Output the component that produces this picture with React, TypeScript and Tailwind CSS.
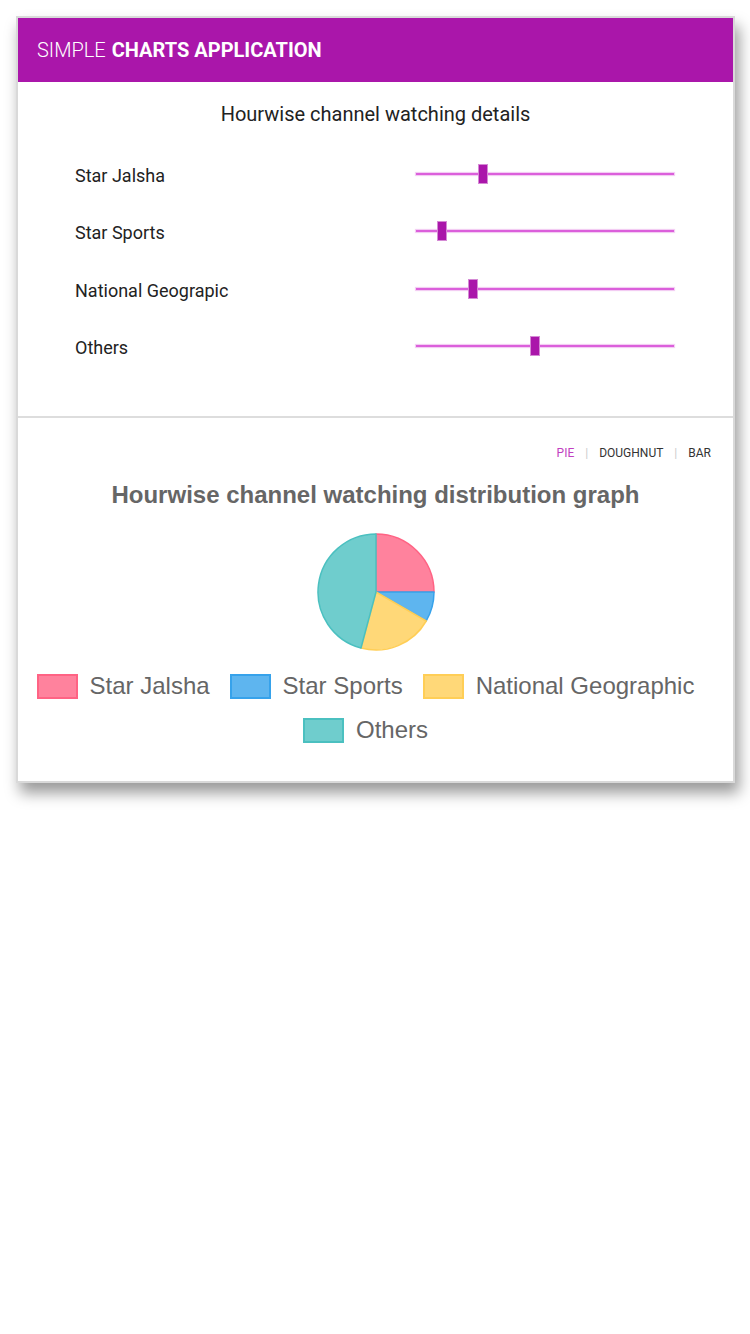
import React from "react";

const channels = [
  { name: "Star Jalsha", hours: 6, fill: "#ff829d", line: "#ff6384" },
  { name: "Star Sports", hours: 2, fill: "#5eb5ef", line: "#36a2eb" },
  { name: "National Geograpic", hours: 5, fill: "#ffd878", line: "#ffce56" },
  { name: "Others", hours: 11, fill: "#6fcdcd", line: "#4bc0c0" },
];

const legendNames = ["Star Jalsha", "Star Sports", "National Geographic", "Others"];

function Slider({ value }: { value: number }) {
  const frac = value / 24;
  return (
    <div className="relative w-[258px] h-[20px] flex items-center">
      <div className="w-full h-[2px] bg-[#db5fdb] shadow-[0_0_1px_1px_rgba(219,95,219,0.35)]" />
      <div
        className="absolute top-0 w-[10px] h-[20px] bg-[#aa16aa] border border-[#d58ad5]"
        style={{ left: frac * 248 }}
      />
    </div>
  );
}

function Pie() {
  const cx = 60;
  const cy = 60;
  const r = 58;
  const total = channels.reduce((s, c) => s + c.hours, 0);
  let start = 0;
  const pt = (deg: number) => {
    const a = (deg * Math.PI) / 180;
    return `${(cx + r * Math.sin(a)).toFixed(2)} ${(cy - r * Math.cos(a)).toFixed(2)}`;
  };
  return (
    <svg width="120" height="120" viewBox="0 0 120 120">
      {channels.map((c) => {
        const sweep = (c.hours / total) * 360;
        const end = start + sweep;
        const d = `M${cx} ${cy} L${pt(start)} A${r} ${r} 0 ${sweep > 180 ? 1 : 0} 1 ${pt(end)} Z`;
        start = end;
        return <path key={c.name} d={d} fill={c.fill} stroke={c.line} strokeWidth="1.5" strokeLinejoin="round" />;
      })}
    </svg>
  );
}

export default function App() {
  return (
    <div className="w-[750px] min-h-[1334px] bg-white pt-4 px-4">
      <div className="w-[719px] bg-white border-2 border-[#d9d9d9] shadow-[4px_10px_14px_rgba(0,0,0,0.4)]">
        {/* header */}
        <div className="h-[64px] bg-[#aa16aa] flex items-center pl-[19px] text-white text-[20px] font-['Roboto',sans-serif]">
          <span className="font-light">SIMPLE</span>
          <span className="font-bold ml-[6px]">CHARTS APPLICATION</span>
        </div>

        {/* sliders */}
        <div className="pt-[19px] pb-[40px] border-b-2 border-[#dddddd] font-['Roboto',sans-serif] text-[#222]">
          <div className="text-center text-[20px] leading-[26px]">Hourwise channel watching details</div>
          <div className="mt-[20px] pl-[57px] pr-[59px]">
            {channels.map((c) => (
              <div key={c.name} className="h-[57.3px] flex items-center">
                <div className="flex-1 text-[18px]">{c.name}</div>
                <div className="-mt-[3px]">
                  <Slider value={c.hours} />
                </div>
              </div>
            ))}
          </div>
        </div>

        {/* chart */}
        <div className="pt-[27px] pb-[29px]">
          <div className="flex justify-end items-center pr-[22px] h-[16px] text-[12px] font-['Roboto',sans-serif] text-[#333]">
            <span className="text-[#c13fc1]">PIE</span>
            <span className="mx-[11px] text-[#cccccc]">|</span>
            <span>DOUGHNUT</span>
            <span className="mx-[11px] text-[#cccccc]">|</span>
            <span>BAR</span>
          </div>
          <div className="mt-[20px] text-center text-[24px] leading-[28px] font-bold text-[#666] font-['Liberation_Sans',Arial,sans-serif]">
            Hourwise channel watching distribution graph
          </div>
          <div className="mt-[23px] flex justify-center">
            <Pie />
          </div>
          <div className="mt-[12px] flex flex-wrap justify-center gap-x-5 pl-[9px] pr-[29px] font-['Liberation_Sans',Arial,sans-serif] text-[24px] text-[#666]">
            {legendNames.map((n, i) => (
              <div key={n} className="h-[44px] flex items-center">
                <div
                  className="w-[41px] h-[25px] border-2"
                  style={{ background: channels[i].fill, borderColor: channels[i].line }}
                />
                <span className="ml-[12px]">{n}</span>
              </div>
            ))}
          </div>
        </div>
      </div>
    </div>
  );
}
